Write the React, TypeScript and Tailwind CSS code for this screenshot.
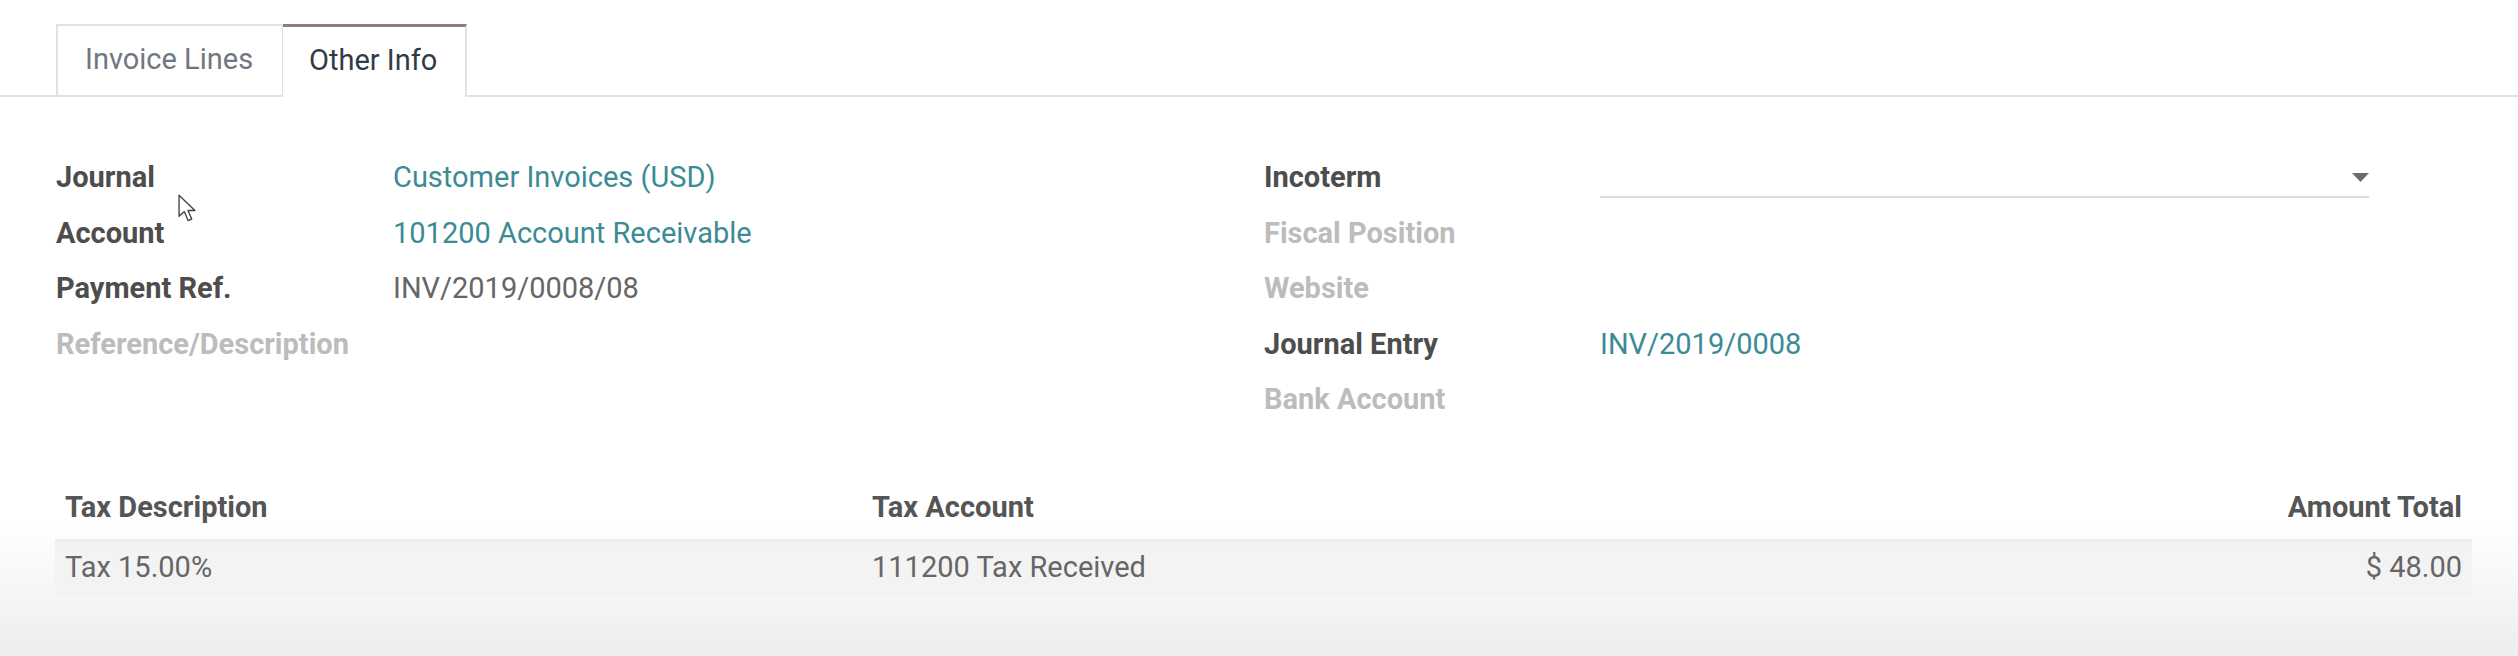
const leftFields = [
  { label: 'Journal', value: 'Customer Invoices (USD)', kind: 'link' },
  { label: 'Account', value: '101200 Account Receivable', kind: 'link' },
  { label: 'Payment Ref.', value: 'INV/2019/0008/08', kind: 'text' },
  { label: 'Reference/Description', value: '', kind: 'muted' },
]

const rightFields = [
  { label: 'Incoterm', value: '', kind: 'select' },
  { label: 'Fiscal Position', value: '', kind: 'muted' },
  { label: 'Website', value: '', kind: 'muted' },
  { label: 'Journal Entry', value: 'INV/2019/0008', kind: 'link' },
  { label: 'Bank Account', value: '', kind: 'muted' },
]

type Field = { label: string; value: string; kind: string }

function Value({ f }: { f: Field }) {
  if (f.kind === 'link') return <span className="text-[#3b8b94]">{f.value}</span>
  if (f.kind === 'text') return <span className="text-[#666666]">{f.value}</span>
  if (f.kind === 'select')
    return (
      <div className="flex h-[48px] items-start justify-end pt-[23px] border-b-2 border-[#dcdcdc]">
        <svg width="17" height="9" viewBox="0 0 17 9" className="block">
          <path d="M0 0 L17 0 L8.5 9 Z" fill="#6b6b6b" />
        </svg>
      </div>
    )
  return null
}

function FieldGroup({ fields, cols }: { fields: Field[]; cols: string }) {
  return (
    <div className={`grid content-start ${cols}`}>
      {fields.map(f => [
        <div key={f.label + '-l'} className="h-[55.5px] leading-[55.5px]">
          <span className={f.kind === 'muted' ? 'font-bold text-[#bcbcbc]' : 'font-bold text-[#4d4d4d]'}>{f.label}</span>
        </div>,
        <div key={f.label + '-v'} className="h-[55.5px] leading-[55.5px]">
          <Value f={f} />
        </div>,
      ])}
    </div>
  )
}

export default function App() {
  return (
    <div className="relative h-[656px] w-full overflow-hidden bg-[linear-gradient(to_bottom,#ffffff_0%,#ffffff_80%,#ededed_100%)] font-['Roboto',sans-serif] text-[29px]">
      {/* Tabs */}
      <div className="flex pl-[56px] pt-[24px] border-b-2 border-[#dee2e6]">
        <div className="h-[71px] w-[227px] pl-[27px] border-t-2 border-l-2 border-r border-[#dee2e6] leading-[67px] text-[#717780] mb-[-2px]">
          Invoice Lines
        </div>
        <div className="h-[73px] w-[184px] pl-[26px] border-t-[3px] border-t-[#8d7c88] border-r-2 border-[#dee2e6] bg-white leading-[66px] text-[#323a45] mb-[-2px]">
          Other Info
        </div>
      </div>

      {/* Form */}
      <div className="grid grid-cols-[1208px_1fr] items-start pl-[56px] pt-[53px]">
        <FieldGroup fields={leftFields} cols="grid-cols-[337px_1fr]" />
        <FieldGroup fields={rightFields} cols="grid-cols-[336px_769px]" />
      </div>

      {/* Tax table */}
      <div className="ml-[55px] mt-[50px] w-[2417px]">
        <div className="grid grid-cols-[807px_1fr_400px] h-[61px] items-center font-bold text-[#555555]">
          <div className="px-[10px]">Tax Description</div>
          <div className="px-[10px]">Tax Account</div>
          <div className="px-[10px] text-right">Amount Total</div>
        </div>
        <div className="grid grid-cols-[807px_1fr_400px] h-[58px] items-center bg-[#f3f3f3] text-[#666666] shadow-[inset_0_6px_8px_-6px_rgba(0,0,0,0.05)]">
          <div className="px-[10px]">Tax 15.00%</div>
          <div className="px-[10px]">111200 Tax Received</div>
          <div className="px-[10px] text-right">$ 48.00</div>
        </div>
      </div>

      {/* Mouse pointer */}
      <svg className="absolute left-[178px] top-[194px]" width="19" height="31" viewBox="0 0 18 29">
        <path d="M1 1 L1 21 L6 16.5 L9.5 25 L13 23.5 L9.5 15.5 L16 15.5 Z" fill="#ffffff" stroke="#444444" strokeWidth="1.3" strokeLinejoin="round" />
      </svg>
    </div>
  )
}
